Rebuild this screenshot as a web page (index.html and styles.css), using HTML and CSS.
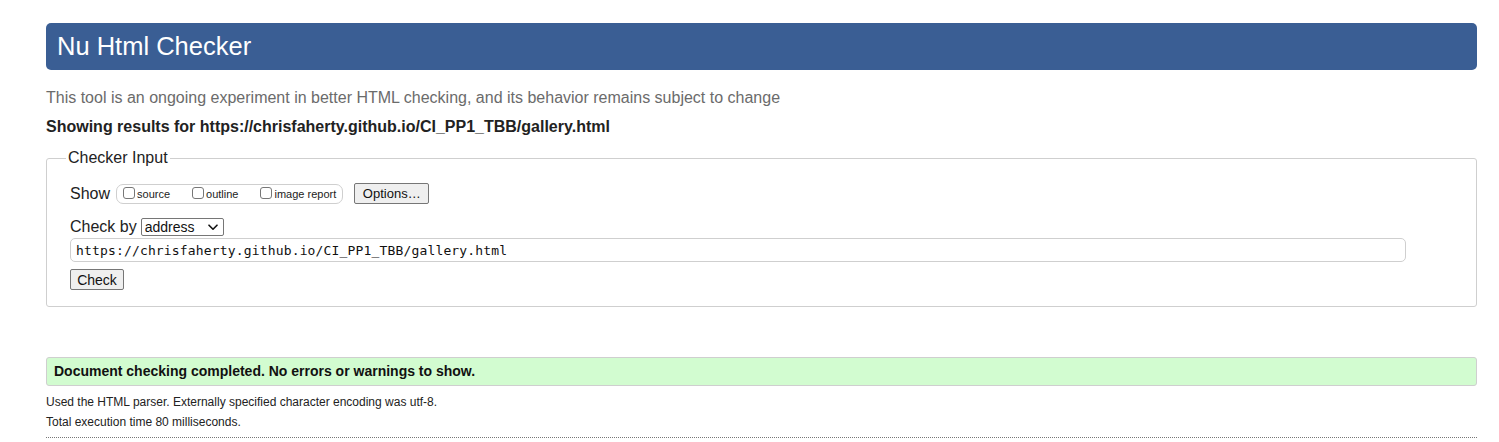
FILE: index.html
```html
<!DOCTYPE html>
<html lang="en">
<head>
<meta charset="utf-8">
<title>Nu Html Checker</title>
<link rel="stylesheet" href="styles.css">
</head>
<body>
<div class="page">
  <h1 class="title">Nu Html Checker</h1>
  <p class="subtitle">This tool is an ongoing experiment in better HTML checking, and its behavior remains subject to change</p>
  <p class="showing">Showing results for https://chrisfaherty.github.io/CI_PP1_TBB/gallery.html</p>
  <fieldset class="checker">
    <legend class="legend">Checker Input</legend>
    <div class="row show-row">
      <span class="label">Show</span>
      <span class="show-group">
        <label class="opt"><input type="checkbox" class="cb"><span>source</span></label>
        <label class="opt"><input type="checkbox" class="cb"><span>outline</span></label>
        <label class="opt"><input type="checkbox" class="cb"><span>image report</span></label>
      </span>
      <button class="btn btn-options" type="button">Options…</button>
    </div>
    <div class="row by-row">
      <span class="label">Check by</span>
      <span class="select-wrap">
        <select class="select"><option>address</option></select>
        <svg class="chev" width="10" height="7" viewBox="0 0 10 7"><path d="M1 1.2 L5 5.2 L9 1.2" fill="none" stroke="#111" stroke-width="1.6" stroke-linecap="round" stroke-linejoin="round"/></svg>
      </span>
    </div>
    <input class="url" type="text" value="https://chrisfaherty.github.io/CI_PP1_TBB/gallery.html">
    <div class="row check-row">
      <button class="btn btn-check" type="button">Check</button>
    </div>
  </fieldset>
  <p class="success">Document checking completed. No errors or warnings to show.</p>
  <p class="info">Used the HTML parser. Externally specified character encoding was utf-8.</p>
  <p class="info">Total execution time 80 milliseconds.</p>
  <hr class="dots">
</div>
</body>
</html>
```
FILE: styles.css
```css
html, body {
  margin: 0;
  padding: 0;
  background: #fff;
}
body {
  font-family: "Liberation Sans", Arial, Helvetica, sans-serif;
  color: #222;
}
.page {
  padding: 23px 22px 0 46px;
  display: flex;
  flex-direction: column;
}
.title {
  margin: 0;
  height: 47px;
  line-height: 47px;
  font-size: 25.5px;
  font-weight: normal;
  color: #fff;
  background: #3a5e94;
  border-radius: 5px;
  padding-left: 11px;
}
.subtitle {
  margin: 19px 0 0;
  font-size: 16px;
  line-height: 18px;
  color: #6b6b6b;
}
.showing {
  margin: 11px 0 0;
  font-size: 16px;
  line-height: 18px;
  font-weight: bold;
  color: #222;
}
.checker {
  margin: 13px 0 0;
  border: 1px solid #cfcfcf;
  border-radius: 3px;
  padding: 0 23px 16px;
  min-width: 0;
}
.legend {
  font-size: 16px;
  line-height: 18px;
  padding: 0 2px;
  margin-left: -4px;
  color: #222;
}
.row {
  display: flex;
  align-items: center;
}
.label {
  font-size: 16px;
  line-height: 18px;
  color: #222;
}
.show-row {
  margin-top: 16px;
  height: 21px;
}
.show-group {
  margin-left: 6px;
  height: 20px;
  box-sizing: border-box;
  border: 1px solid #cfcfcf;
  border-radius: 7px;
  padding: 0 6px 0 6px;
  display: flex;
  align-items: center;
  gap: 22px;
}
.opt {
  display: flex;
  align-items: center;
  font-size: 11px;
  color: #222;
}
.cb {
  appearance: none;
  -webkit-appearance: none;
  margin: 0 2px 0 0;
  width: 12px;
  height: 12px;
  border: 1px solid #777;
  border-radius: 3px;
  background: #fff;
  box-sizing: border-box;
  position: relative;
  top: -1px;
}
.btn {
  font-family: "Liberation Sans", Arial, Helvetica, sans-serif;
  font-size: 13px;
  color: #111;
  background: #efefef;
  border: 1px solid #767676;
  border-radius: 2px;
  padding: 0 7px;
  height: 21px;
  box-sizing: border-box;
}
.btn-options {
  margin-left: 11px;
  width: 75px;
}
.by-row {
  margin-top: 14px;
}
.select-wrap {
  position: relative;
  display: inline-flex;
  margin-left: 4px;
}
.select {
  appearance: none;
  -webkit-appearance: none;
  font-family: "Liberation Sans", Arial, Helvetica, sans-serif;
  font-size: 14px;
  width: 83px;
  height: 18px;
  box-sizing: border-box;
  border: 1px solid #767676;
  border-radius: 2px;
  background: #fff;
  color: #111;
  padding: 0 3px;
  line-height: 16px;
}
.chev {
  position: absolute;
  right: 6px;
  top: 6px;
  pointer-events: none;
}
.url {
  margin: 2px 0 0;
  width: 1336px;
  height: 24px;
  box-sizing: border-box;
  border: 1px solid #cfcfcf;
  border-radius: 5px;
  padding: 0 5px;
  font-family: "DejaVu Sans Mono", Menlo, monospace;
  font-size: 13px;
  letter-spacing: 0.16px;
  line-height: 22px;
  color: #111;
  background: #fff;
}
.check-row {
  margin-top: 7px;
}
.btn-check {
  width: 54px;
  height: 21px;
  font-size: 14px;
  padding: 0;
}
.success {
  margin: 50px 0 0;
  height: 29px;
  box-sizing: border-box;
  border: 1px solid #cfcfcf;
  border-radius: 3px;
  background: #d2fcd0;
  font-size: 14px;
  font-weight: bold;
  line-height: 27px;
  padding-left: 7px;
  color: #111;
}
.info {
  margin: 9px 0 0;
  font-size: 12px;
  line-height: 14px;
  color: #222;
}
.info + .info {
  margin-top: 6px;
}
.dots {
  margin: 8px 0 0;
  border: 0;
  border-top: 1px dotted #777;
  height: 0;
}
```
